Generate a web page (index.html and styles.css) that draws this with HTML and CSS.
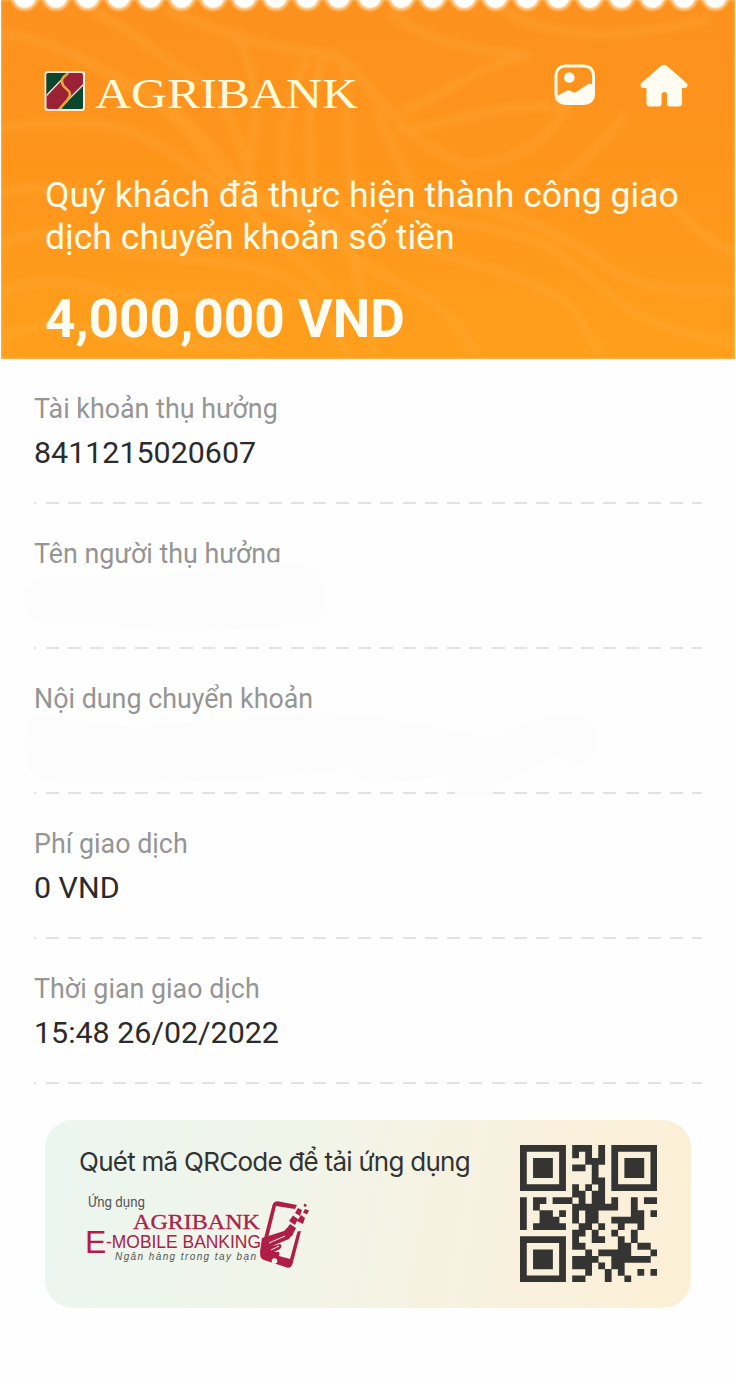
FILE: index.html
```html
<!DOCTYPE html>
<html lang="vi">
<head>
  <meta charset="UTF-8">
  <meta name="viewport" content="width=device-width, initial-scale=1.0">
  <title>Agribank</title>
  <link rel="stylesheet" href="styles.css">
</head>
<body>

  <header class="header">
    <svg class="waves" viewBox="0 0 734 359" preserveAspectRatio="none">
      <path d="M0 34 C50 38 75 58 110 74 S170 108 215 170 S290 250 330 290"/>
      <path d="M92 12 C130 26 160 60 192 78 S236 130 250 180"/>
      <path d="M165 10 C215 28 250 46 300 50 S350 64 370 90 S420 150 470 166"/>
      <path d="M232 30 C252 62 262 100 246 176"/>
      <path d="M310 50 C290 90 276 130 284 180"/>
      <path d="M324 56 C306 96 306 130 312 190"/>
      <path d="M340 60 C352 90 342 130 350 190"/>
      <path d="M0 128 C70 118 120 120 160 146 S220 196 290 210 S350 250 374 358"/>
      <path d="M110 84 C160 92 190 120 224 164 S310 220 350 240"/>
      <path d="M390 12 C420 38 460 50 520 54"/>
      <path d="M500 8 C540 36 610 44 710 18"/>
      <path d="M400 112 C450 92 480 62 530 56"/>
      <path d="M396 132 C450 124 500 100 566 108 C540 150 500 166 462 164"/>
      <path d="M376 108 C384 140 400 160 412 190"/>
      <path d="M624 114 C600 150 580 160 560 180"/>
      <path d="M0 194 C30 184 60 188 96 196"/>
      <path d="M0 244 C40 226 76 232 110 246 S220 256 270 272 S320 320 350 358"/>
      <path d="M0 296 C40 268 80 288 120 294 S230 288 290 310"/>
      <path d="M0 336 C50 318 90 328 130 340 S220 340 260 350"/>
      <path d="M290 180 C310 240 360 262 410 290 S460 330 476 358"/>
      <path d="M330 190 C360 240 440 250 520 280 S570 330 606 358"/>
      <path d="M380 200 C440 230 520 220 570 262 S640 330 734 342"/>
      <path d="M440 200 C500 210 560 230 600 262 S680 290 734 292"/>
      <path d="M650 180 C680 214 700 240 734 252"/>
    </svg>
    <div class="scallops"></div>

    <div class="topbar">
      <svg class="brand" width="320" height="50" viewBox="0 0 320 50">
        <rect x="0.500" y="1" width="40.500" height="40" rx="3" fill="#f8ead4"/>
        <clipPath id="mark"><rect x="2.500" y="3" width="36.500" height="36" rx="2"/></clipPath>
        <g clip-path="url(#mark)">
          <rect x="2" y="3" width="37" height="36" fill="#9b2236"/>
          <path d="M2 3H24L2 26Z" fill="#09482c"/>
          <path d="M39 16V39H15Z" fill="#09482c"/>
          <path d="M25 2L1 27M40 14L14 40" stroke="#f8ead4" stroke-width="1.300"/>
          <path d="M24 3C22 6 17 7 18 12C18 18 25 18 26 24C26 30 20 32 16 39" fill="none" stroke="#e9a53a" stroke-width="2.600"/>
        </g>
        <text class="brand-name" x="51" y="38" textLength="263" lengthAdjust="spacingAndGlyphs">AGRIBANK</text>
      </svg>
      <div class="actions">
        <svg width="42" height="42" viewBox="0 0 42 42">
          <rect x="2" y="2" width="37.500" height="37.500" rx="9" fill="none" stroke="#fffbe8" stroke-width="3"/>
          <circle cx="15.300" cy="13.500" r="5.300" fill="#fffdf2"/>
          <path d="M3 32L12 27Q15 25.500 17.500 27.500Q20 29.500 23 27.500L34 20Q36.500 18.500 39.500 22V31Q39.500 40 30 40H11Q4 40 3 32Z" fill="#fffdf2"/>
        </svg>
        <svg width="50" height="44" viewBox="0 0 50 44">
          <path d="M22.500 1.500Q25 0 27.500 1.500L47.500 19Q49.500 21 48 23Q47 24 43 24V39Q43 42.500 39 42.500H31Q28 42.500 28 40V30Q28 28 25.500 28T22.500 30V40Q22.500 42.500 19.500 42.500H11Q7.500 42.500 7.500 39V24Q3 24 2 23Q0.500 21 2.500 19Z" fill="#fffdf2"/>
        </svg>
      </div>
    </div>

    <p class="message">Quý khách đã thực hiện thành công giao<br>dịch chuyển khoản số tiền</p>
    <p class="amount">4,000,000 VND</p>
  </header>

  <main class="details">
    <div class="row">
      <p class="label">Tài khoản thụ hưởng</p>
      <p class="value">8411215020607</p>
    </div>
    <div class="row">
      <p class="label">Tên người thụ hưởng</p>
      <svg class="smudge" width="320" height="80" viewBox="15 555 320 80">
        <path d="M24 602C24 586 32 578 46 577C110 572 190 578 240 566C275 560 305 561 314 570C328 582 330 606 320 617C312 628 290 626 265 627C220 630 180 636 140 629C100 623 60 627 42 623C30 620 24 612 24 602Z"/>
      </svg>
    </div>
    <div class="row">
      <p class="label">Nội dung chuyển khoản</p>
      <svg class="smudge" width="600" height="95" viewBox="15 705 600 95">
        <path d="M24 746C24 724 32 712 46 714C80 722 120 728 160 725C220 720 290 711 350 714C400 718 450 730 490 737C520 727 545 713 572 714C590 716 600 732 598 746C596 762 584 768 572 763C564 759 560 756 552 760C530 768 510 778 493 789V798H455V790C449 785 452 780 445 778C420 778 400 783 375 783C352 783 358 769 345 769C310 774 270 781 220 779C160 786 100 784 58 783C34 781 24 768 24 746Z"/>
      </svg>
    </div>
    <div class="row">
      <p class="label">Phí giao dịch</p>
      <p class="value">0 VND</p>
    </div>
    <div class="row">
      <p class="label">Thời gian giao dịch</p>
      <p class="value">15:48 26/02/2022</p>
    </div>
  </main>

  <section class="promo">
    <div class="promo-text">
      <p class="promo-title">Quét mã QRCode để tải ứng dụng</p>
      <svg class="app-logo" width="236" height="88" viewBox="80 1188 236 88">
        <text x="89" y="1207" class="app-small" textLength="57" lengthAdjust="spacingAndGlyphs">Ứng dụng</text>
        <text x="134" y="1228.500" class="app-serif" textLength="127" lengthAdjust="spacingAndGlyphs">AGRIBANK</text>
        <text x="86" y="1252.500" class="app-e">E</text>
        <text x="107" y="1248" class="app-sans" textLength="155" lengthAdjust="spacingAndGlyphs">-MOBILE BANKING</text>
        <text x="116" y="1259.500" class="app-tag" textLength="141">Ngân hàng trong tay bạn</text>
        <g fill="#b01e45">
          <path d="M298 1205L280 1201.500Q275 1200.500 273.500 1205L261.500 1252Q260 1258 265 1260L288 1267.500Q292 1268.500 293.500 1264L302 1231L298.500 1231.500L291 1259L265.500 1252L277 1206L296 1209Z"/>
          <path d="M263 1238L285 1231L288 1228L294 1234L290 1239L273 1246L281 1244Q284 1246 281 1249L275 1252L280 1252Q282 1255 277 1258L291 1259L289 1266L264 1258L261 1252Z"/>
          <path d="M294 1215.500L299 1219L296 1225L290 1221ZM302 1215L306 1218L304 1224L298 1221ZM299 1208L303 1210L301 1216L296 1213ZM306 1209L310 1210.500L308 1214.500L304 1212.500ZM291 1224L297 1228L293 1236L286 1231ZM305.500 1203.500L308 1205L306.500 1207L304.500 1206Z"/>
          <path d="M270 1243L286 1236M272 1250L280 1246" stroke="#f1f4ea" stroke-width="1" fill="none"/>
          <circle cx="275.500" cy="1261" r="2.800" fill="#f1f4ea"/>
        </g>
      </svg>
    </div>
    <svg class="qr" width="137" height="137" viewBox="0 0 21 21"></svg>
  </section>

  <script>
    let qr = document.querySelector('.qr')

    let modules = [
      '111111101110101111111',
      '100000101010101000001',
      '101110100011101011101',
      '101110101101001011101',
      '101110100001001011101',
      '100000100001101000001',
      '111111101010101111111',
      '000000001101100000000',
      '101101110101101001011',
      '101000001111111001000',
      '100110101011000001101',
      '100111001011001111100',
      '101111100110100100100',
      '000000001101001001000',
      '111111101001100101000',
      '100000101100000110110',
      '101110100010111110001',
      '101110101111001111110',
      '101110101110101100000',
      '100000100010010100101',
      '111111101100010010000'
    ]

    // cells overlap a little so no seams show between them
    let d = ''
    modules.forEach((line, y) => {
      [...line].forEach((cell, x) => {
        if(cell === '1') d += `M${x} ${y}h1.04v1.04h-1.04z`
      })
    })
    qr.innerHTML = `<path d="${d}" fill="#343432"/>`
  </script>

</body>
</html>
```
FILE: styles.css
```css
body {
  font-family: Roboto, 'Liberation Sans', sans-serif;
  margin: 0;
  background-color: #fefefe;
  color: #2b2b2b;
}

p {
  margin: 0;
  white-space: nowrap;
}

svg {
  display: block;
  flex: none;
}

.header {
  position: relative;
  box-sizing: border-box;
  height: 359px;
  margin: 0 1px;
  overflow: hidden;
  background: linear-gradient(#fc911e, #fe951b 45%, #ff9f1b);
  box-shadow: inset 0 0 3px #ffc675;
  color: #fffbe6;
}

.waves {
  position: absolute;
  top: 0;
  left: 0;
  width: 100%;
  height: 100%;
  fill: none;
  stroke: #ffb348;
  stroke-width: 8;
  opacity: 0.27;
  filter: blur(3px);
}

.scallops {
  position: relative;
  height: 16px;
  margin: 0 4px 0 7.500px;
  background: radial-gradient(circle at 50% -3px, #fffefa 10px, rgba(255, 225, 180, 0.75) 11.5px, rgba(255, 200, 120, 0) 15.5px) 0 0 / 31.400px 16px repeat-x;
}

.topbar {
  position: relative;
  display: flex;
  justify-content: space-between;
  height: 107px;
  box-sizing: border-box;
  padding: 48px 46px 0 43px;
}

.brand {
  margin-top: 6px;
}

.brand-name {
  font-family: 'Liberation Serif', serif;
  font-size: 42px;
  fill: #fffbdc;
}

.actions {
  display: flex;
  gap: 43px;
}

.message {
  position: relative;
  padding: 51px 0 0 44px;
  font-size: 35.600px;
  line-height: 42px;
}

.amount {
  position: relative;
  padding: 31px 0 0 44px;
  font-size: 53.200px;
  line-height: 60px;
  font-weight: 700;
  color: #fffdf2;
}

.details {
  padding: 0 34px;
}

.row {
  position: relative;
  box-sizing: border-box;
  height: 145px;
  padding-top: 34px;
}

/* dashed divider, starts with a cut-off dash */
.row::after {
  content: '';
  display: block;
  position: absolute;
  left: 0;
  right: 0;
  bottom: 0;
  height: 2px;
  background: repeating-linear-gradient(90deg, #e2e2e2 0 13px, transparent 13px 22.300px) -10.500px 0 / 720px 2px;
}

.label {
  font-size: 26.850px;
  line-height: 32px;
  color: #959595;
}

.value {
  margin-top: 10px;
  font-size: 30.400px;
  line-height: 36px;
}

.smudge {
  position: absolute;
  left: -19px;
  top: 51px;
  z-index: 1;
  fill: #fcfcfc;
}

.row:nth-child(3) .smudge {
  top: 56px;
}

.promo {
  display: flex;
  justify-content: space-between;
  box-sizing: border-box;
  width: 646px;
  height: 188px;
  margin: 36px 0 0 45px;
  padding: 25px 34px 0 34px;
  border-radius: 28px;
  background: linear-gradient(100deg, #ebf6f0, #f2f4e7 45%, #f8f1df 70%, #fcefd5);
}

.promo-title {
  font-family: Inter, 'Liberation Sans', sans-serif;
  font-size: 26px;
  line-height: 34px;
  letter-spacing: -0.740px;
  color: #333;
}

.app-logo {
  margin-top: 9px;
}

.app-small {
  font-size: 15px;
  fill: #555;
}

.app-serif {
  font-family: 'Liberation Serif', serif;
  font-size: 21px;
  fill: #a82348;
  stroke: #a82348;
  stroke-width: 0.3px;
}

.app-e {
  font-family: 'Liberation Sans', sans-serif;
  font-size: 32px;
  fill: #b01e45;
}

.app-sans {
  font-family: 'Liberation Sans', sans-serif;
  font-size: 18.500px;
  fill: #a82348;
}

.app-tag {
  font-family: 'Liberation Sans', sans-serif;
  font-size: 10px;
  font-style: italic;
  fill: #555;
}
```
